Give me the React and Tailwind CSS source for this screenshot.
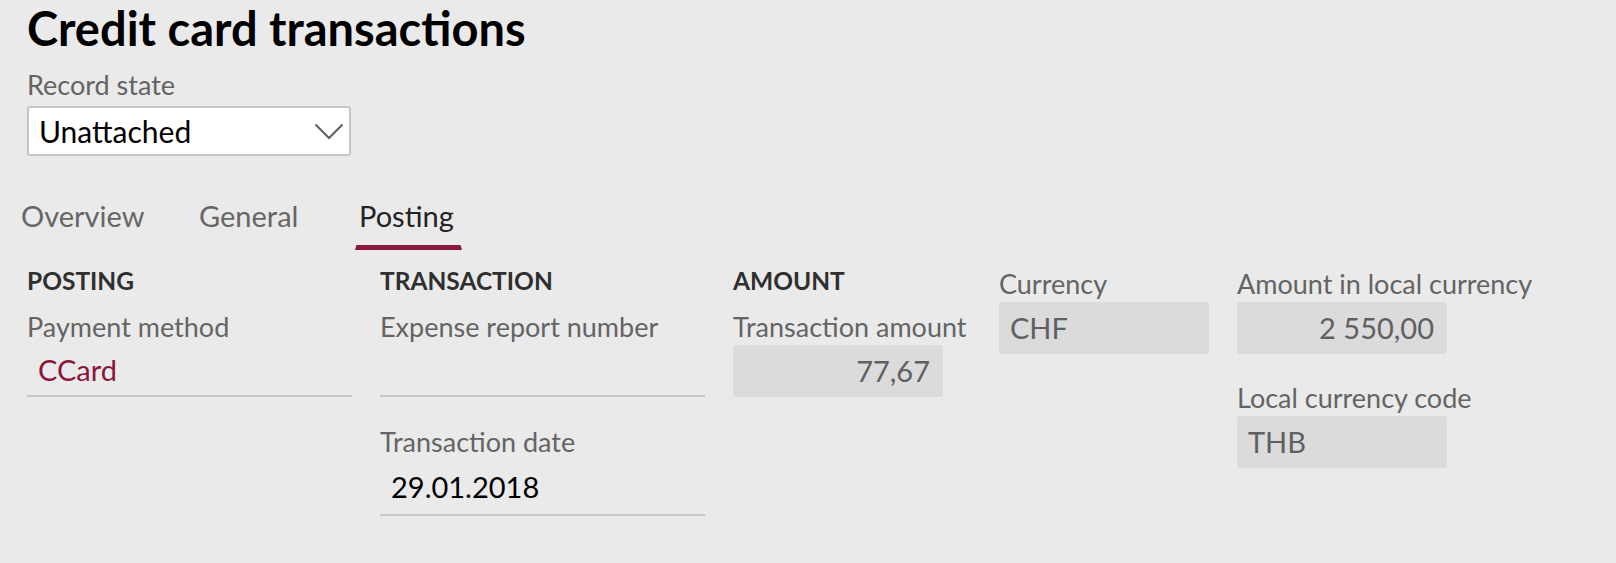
import React from "react";

function Label({ children, className = "" }) {
  return <div className={`text-[27px] leading-[35px] text-[#646464] whitespace-nowrap ${className}`}>{children}</div>;
}

function Header({ children }) {
  return <div className="text-[24.5px] leading-[30px] font-bold text-[#2f2f2f] whitespace-nowrap">{children}</div>;
}

function UnderlineField({ value, valueClass = "text-black", tall = false }) {
  return (
    <div
      className={`mt-[1px] border-b-2 border-[#c8c8c8] pl-[11px] text-[29px] whitespace-nowrap ${
        tall ? "h-[56px] leading-[54px]" : "h-[52px] leading-[50px]"
      } ${valueClass}`}
    >
      {value}
    </div>
  );
}

function ReadBox({ value, right = false, className = "" }) {
  return (
    <div
      className={`mt-[1px] h-[52px] w-[210px] rounded-[3px] bg-[#dbdbdb] text-[29px] leading-[52px] text-[#606060] whitespace-nowrap ${
        right ? "pr-[13px] text-right" : "pl-[11px]"
      } ${className}`}
    >
      {value}
    </div>
  );
}

function Tab({ label, active, className = "" }) {
  return (
    <div className={`flex flex-col ${className}`}>
      <div className={`pl-1 text-[29px] leading-[40px] whitespace-nowrap ${active ? "text-[#232323]" : "text-[#666666]"}`}>{label}</div>
      <div
        className={`mt-[9px] h-[5px] ${
          active ? "bg-[#8a1a40] [clip-path:polygon(1.5px_0,calc(100%-1.5px)_0,100%_100%,0_100%)]" : "bg-transparent"
        }`}
      />
    </div>
  );
}

export default function App() {
  return (
    <div className="min-h-[563px] w-full bg-[#eaeaea] font-[Lato,sans-serif]">
      <div className="pl-[27px]">
        <h1 className="text-[47px] font-bold leading-[56px] text-black whitespace-nowrap">Credit card transactions</h1>
        <Label className="mt-[11px] leading-[32px]">Record state</Label>
        <div className="mt-[4px] flex h-[50px] w-[324px] items-center justify-between rounded-[3px] border-2 border-[#c6c6c6] bg-white pl-[10px] pr-[5px]">
          <span className="text-[30px] leading-[46px] text-black">Unattached</span>
          <svg width="30" height="17" viewBox="0 0 30 17" fill="none">
            <polyline points="1.5,1.5 15,15 28.5,1.5" stroke="#5f5f5f" strokeWidth="2" />
          </svg>
        </div>
      </div>

      <div className="mt-[40px] flex pl-[17px]">
        <Tab label="Overview" className="w-[178px]" />
        <Tab label="General" className="w-[160px]" />
        <Tab label="Posting" active className="w-[107px]" />
      </div>

      <div className="mt-[16px] flex items-start gap-[28px] pl-[27px]">
        <div className="w-[325px]">
          <Header>POSTING</Header>
          <Label className="mt-[13px]">Payment method</Label>
          <UnderlineField value="CCard" valueClass="text-[#8a1538]" />
        </div>

        <div className="w-[325px]">
          <Header>TRANSACTION</Header>
          <Label className="mt-[13px]">Expense report number</Label>
          <UnderlineField value="" />
          <Label className="mt-[27px]">Transaction date</Label>
          <UnderlineField value="29.01.2018" tall />
        </div>

        <div className="w-[238px]">
          <Header>AMOUNT</Header>
          <Label className="mt-[13px]">Transaction amount</Label>
          <ReadBox value="77,67" right />
        </div>

        <div className="w-[210px]">
          <Label>Currency</Label>
          <ReadBox value="CHF" />
        </div>

        <div>
          <Label>Amount in local currency</Label>
          <ReadBox value="2 550,00" right />
          <Label className="mt-[26px]">Local currency code</Label>
          <ReadBox value="THB" />
        </div>
      </div>
    </div>
  );
}
